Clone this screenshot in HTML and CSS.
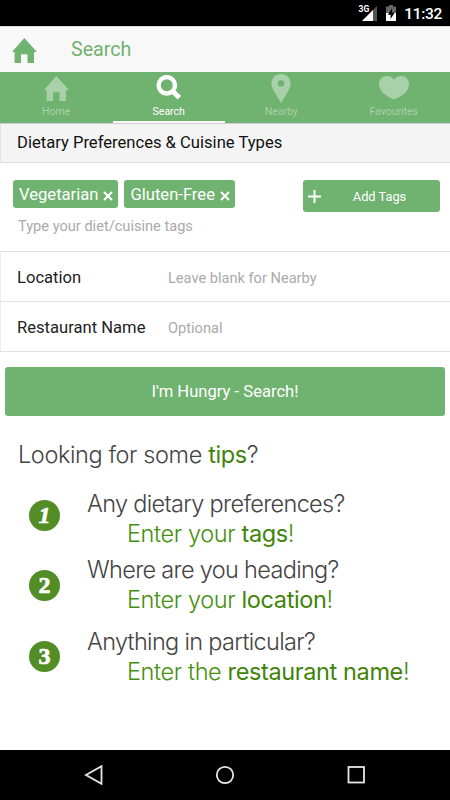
FILE: index.html
```
<!DOCTYPE html>
<html lang="en">
  <head>
    <meta charset="utf-8">
    <title>Search</title>
    <link rel="stylesheet" href="styles.css">
  </head>

  <body>
    <div class="statusbar">
      <span class="net">3G</span>
      <svg class="signal" width="15" height="15" viewBox="0 0 15 15">
        <path d="M15 0V15H0Z" fill="#555" />
        <path d="M11 4V15H0Z" fill="#fff" />
      </svg>
      <svg class="battery" width="10" height="16" viewBox="0 0 10 16">
        <path d="M3 0H7V1.5H10V8H0V1.5H3Z" fill="#666" />
        <path d="M0 8H10V16H0Z" fill="#fff" />
        <path d="M6 3.5L1.8 9.8H4.6V14L8.6 7.8H6Z" fill="#000" />
      </svg>
      <span class="clock">11:32</span>
    </div>

    <header class="header">
      <svg width="25" height="25" viewBox="0 0 25 25">
        <path d="M12.3 0L25 14H22V25H15.5V16.3H9V25H2.6V14H0Z" />
      </svg>
      <h1>Search</h1>
    </header>

    <nav class="tabs">
      <a class="tab">
        <svg width="25" height="25" viewBox="0 0 25 25">
          <path d="M12.3 0L25 14H22V25H15.5V16.3H9V25H2.6V14H0Z" />
        </svg>
        <span>Home</span>
      </a>
      <a class="tab active">
        <svg width="26" height="26" viewBox="0 0 26 26">
          <circle cx="10.8" cy="10.3" r="8.2" fill="none" stroke="#fff" stroke-width="4.4" />
          <path d="M16.5 16L23.4 22.8" stroke="#fff" stroke-width="5" />
        </svg>
        <span>Search</span>
      </a>
      <a class="tab">
        <svg width="20" height="29" viewBox="0 0 20 29">
          <path fill-rule="evenodd" d="M10 0C4.300 0 .4 4.200 .4 9.400C.4 15 6 21.500 10 29C14 21.500 19.600 15 19.600 9.400C19.600 4.200 15.700 0 10 0ZM10 6.200A3.200 3.200 0 1 1 10 12.600A3.200 3.200 0 1 1 10 6.200Z" />
        </svg>
        <span>Nearby</span>
      </a>
      <a class="tab">
        <svg width="30" height="24" viewBox="0 0 30 24">
          <path d="M15 3.600C17 1 19.500 0 22 0C26.800 0 30 3.600 30 8C30 15.500 22.500 20.500 15 23.600C7.500 20.500 0 15.500 0 8C0 3.600 3.200 0 8 0C10.500 0 13 1 15 3.600Z" />
        </svg>
        <span>Favourites</span>
      </a>
    </nav>

    <main>
      <h2 class="section">Dietary Preferences &amp; Cuisine Types</h2>
      <div class="tagbox">
        <div class="tags">
          <span class="tag">Vegetarian
            <svg width="10" height="10" viewBox="0 0 10 10"><path d="M1 1L9 9M9 1L1 9" /></svg>
          </span>
          <span class="tag">Gluten-Free
            <svg width="10" height="10" viewBox="0 0 10 10"><path d="M1 1L9 9M9 1L1 9" /></svg>
          </span>
          <button class="add">
            <svg width="13" height="13" viewBox="0 0 13 13"><path d="M6.500 0V13M0 6.500H13" /></svg>
            <span>Add Tags</span>
          </button>
        </div>
        <p class="hint">Type your diet/cuisine tags</p>
      </div>
      <div class="row">
        <label>Location</label>
        <span class="hint">Leave blank for Nearby</span>
      </div>
      <div class="row">
        <label>Restaurant Name</label>
        <span class="hint">Optional</span>
      </div>
      <button class="search">I'm Hungry - Search!</button>

      <div class="tips">
        <h3>Looking for some <b>tips</b>?</h3>
        <div class="tip">
          <i class="one">1</i>
          <div>
            <p>Any dietary preferences?</p>
            <p class="answer">Enter your <b>tags</b>!</p>
          </div>
        </div>
        <div class="tip">
          <i>2</i>
          <div>
            <p>Where are you heading?</p>
            <p class="answer">Enter your <b>location</b>!</p>
          </div>
        </div>
        <div class="tip last">
          <i>3</i>
          <div>
            <p>Anything in particular?</p>
            <p class="answer">Enter the <b>restaurant name</b>!</p>
          </div>
        </div>
      </div>
    </main>

    <footer class="navbar">
      <svg width="20" height="20" viewBox="0 0 20 20"><path d="M17.500 1.200V18.800L2 10Z" /></svg>
      <svg width="20" height="20" viewBox="0 0 20 20"><circle cx="10" cy="10" r="8.200" /></svg>
      <svg width="20" height="20" viewBox="0 0 20 20"><rect x="2.500" y="2" width="15.500" height="15.500" /></svg>
    </footer>
  </body>
</html>
```

FILE: styles.css
```
* {
  box-sizing: border-box;
}

body {
  margin: 0;
  height: 800px;
  display: flex;
  flex-direction: column;
  background-color: #fff;
  font-family: Roboto, "Liberation Sans", sans-serif;
  overflow: hidden;
}

h1,
h2,
h3,
p {
  margin: 0;
  font-weight: 400;
}

button {
  border: 0;
  font-family: inherit;
  color: #fff;
  background-color: #70b26f;
}

.statusbar {
  height: 26px;
  display: flex;
  align-items: flex-start;
  justify-content: flex-end;
  padding-right: 8px;
  background-color: #000;
  color: #fff;
}

.net {
  margin: 4px -7px 0 0;
  font-size: 8.5px;
  line-height: 11px;
  font-weight: 700;
  z-index: 1;
}

.signal {
  margin-top: 6px;
}

.battery {
  margin: 5px 8px 0 9px;
}

.clock {
  margin-top: 4px;
  font-size: 15.5px;
  line-height: 20px;
  font-weight: 500;
  letter-spacing: -0.3px;
}

.header {
  height: 46px;
  display: flex;
  align-items: center;
  gap: 34px;
  padding-left: 12px;
  border-top: 1px solid #ddd;
  background-color: #f8f8f8;
  fill: #70b26f;
}

.header h1 {
  font-size: 19.6px;
  line-height: 24px;
  color: #70b26f;
}

.header svg {
  margin-top: 2px;
}

.tabs {
  height: 52px;
  display: flex;
  background-color: #70b26f;
  border-bottom: 1px solid #ccc;
}

.tab {
  flex: 1;
  display: flex;
  flex-direction: column;
  align-items: center;
  justify-content: flex-end;
  border-bottom: 2px solid #70b26f;
  font-size: 10.5px;
  line-height: 14px;
  color: #a9d1a9;
  fill: #a9d1a9;
}

.tab svg {
  margin-bottom: 4px;
}

.tab:nth-child(3) svg {
  margin-bottom: 2px;
}

.tab:nth-child(4) svg {
  margin-bottom: 5px;
}

.tab span {
  margin-bottom: 2px;
}

.active {
  color: #fff;
  border-bottom-color: #fff;
}

.section {
  height: 39px;
  padding-left: 16px;
  font-size: 16.6px;
  line-height: 37px;
  color: #111;
  background-color: #f4f4f4;
  border-bottom: 1px solid #ddd;
  border-left: 1px solid #e2e2e2;
}

.tagbox {
  height: 89px;
  padding: 17px 10px 0 13px;
  border-bottom: 1px solid #e2e2e2;
}

.tags {
  display: flex;
  align-items: flex-start;
  gap: 6px;
}

.tag {
  height: 28px;
  display: flex;
  align-items: center;
  gap: 5px;
  padding: 0 5px 0 6px;
  border-radius: 3px;
  font-size: 16.6px;
  color: #fff;
  background-color: #70b26f;
}

.tag svg {
  margin-top: 3px;
}

.tag svg,
.add svg {
  fill: none;
  stroke: #fff;
  stroke-width: 2;
}

.add {
  width: 137px;
  height: 32px;
  display: flex;
  align-items: center;
  margin-left: auto;
  padding: 0 4px 0 5px;
  border-radius: 3px;
  font-size: 12.8px;
}

.add span {
  flex: 1;
  padding-left: 2px;
}

.hint {
  font-size: 14.6px;
  color: #aaa;
}

.tagbox .hint {
  padding: 5px 0 0 5px;
  line-height: 18px;
}

.row {
  height: 50px;
  display: flex;
  align-items: center;
  padding: 2px 0 0 16px;
  border-bottom: 1px solid #e2e2e2;
  border-left: 1px solid #eee;
}

.row label {
  width: 151px;
  font-size: 16.6px;
  color: #222;
}

.search {
  display: block;
  width: 440px;
  height: 49px;
  margin: 15px 5px 0;
  border-radius: 3px;
  font-size: 16.6px;
}

.tips {
  padding: 24px 0 0 18px;
  font-family: Inter, "Liberation Sans", sans-serif;
  font-weight: 300;
  color: #444;
}

.tips h3,
.tips p {
  font-size: 23.5px;
  line-height: 30px;
  font-weight: 300;
  letter-spacing: -0.68px;
}

.tips h3 {
  letter-spacing: -0.4px;
}

.tips b {
  font-weight: 420;
  color: #3f8408;
}

.tips .answer {
  padding-left: 40px;
  letter-spacing: -0.38px;
  color: #45900f;
}

.tip {
  display: flex;
  padding: 19px 0 0 11px;
}

.tip + .tip {
  padding-top: 6px;
}

.tips .last {
  padding-top: 12px;
}

.tip i {
  width: 31px;
  height: 31px;
  margin: 15px 27px 0 0;
  border-radius: 50%;
  font: normal 700 24px/30px "Liberation Serif", serif;
  text-align: center;
  color: #fff;
  background-color: #528d25;
  -webkit-text-stroke: 0.7px #fff;
}

.tip .one {
  margin-top: 11px;
  font-style: italic;
}

.last i {
  margin-top: 14px;
}

.navbar {
  height: 50px;
  display: flex;
  align-items: center;
  justify-content: space-between;
  margin-top: auto;
  padding: 0 84px;
  background-color: #000;
  fill: none;
  stroke: #e6e6e6;
  stroke-width: 1.8;
}
```
